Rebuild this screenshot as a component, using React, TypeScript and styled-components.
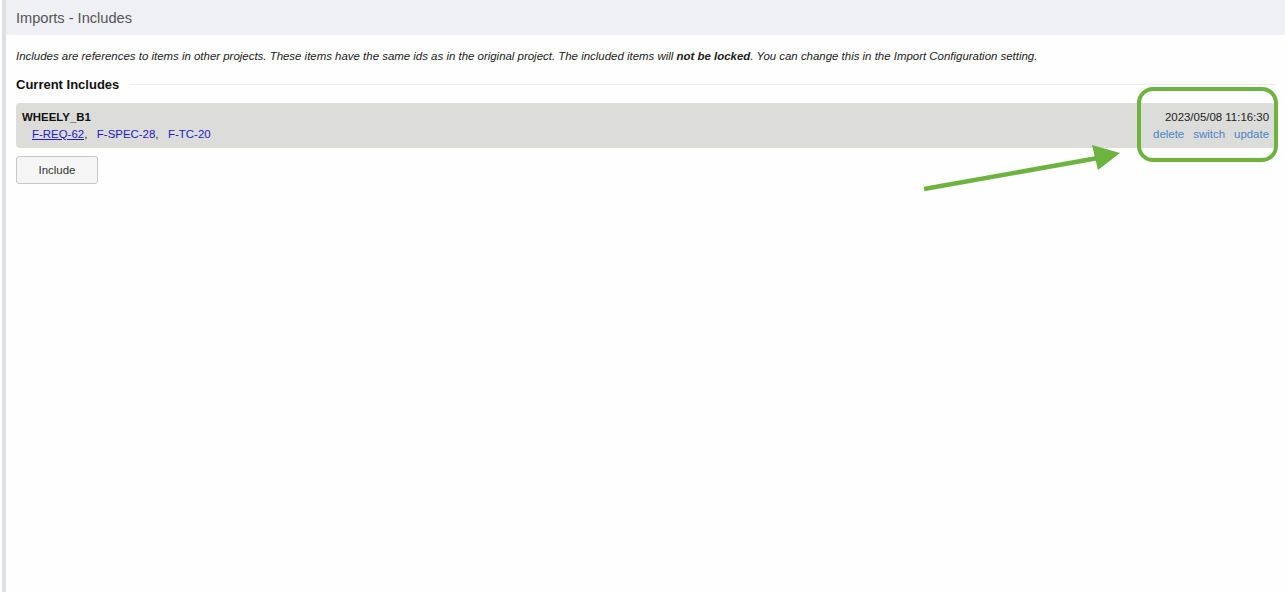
import React from "react";
import styled, { createGlobalStyle } from "styled-components";

const GlobalStyle = createGlobalStyle`
    html, body {
        margin: 0;
        padding: 0;
        background: #fdfefd;
        font-family: "Liberation Sans", Arial, sans-serif;
    }
    #root {
        min-height: 592px;
    }
`;

const Page = styled.div`
    display: flex;
    min-height: 592px;
    position: relative;
`;

const SideStrip = styled.div`
    width: 4px;
    margin-left: 2px;
    background-color: #dde1e6;
    flex-shrink: 0;
`;

const Main = styled.div`
    flex: 1;
    display: flex;
    flex-direction: column;
`;

const TitleBar = styled.header`
    height: 35px;
    display: flex;
    align-items: center;
    padding-left: 10px;
    background-color: #eef0f4;
    color: #555;
    font-size: 14.6px;
`;

const Content = styled.div`
    padding: 14px 9px 0 10px;
`;

const Intro = styled.p`
    margin: 0;
    font-size: 11.45px;
    font-style: italic;
    color: #222;
    line-height: 14px;
    b {
        font-weight: bold;
    }
`;

const SectionTitle = styled.div`
    display: flex;
    align-items: center;
    gap: 10px;
    margin-top: 14px;
    font-size: 13px;
    font-weight: bold;
    color: #111;
    &::after {
        content: "";
        flex: 1;
        height: 1px;
        background: #eceeec;
    }
`;

const IncludeRow = styled.div`
    margin-top: 11px;
    display: flex;
    justify-content: space-between;
    align-items: flex-start;
    padding: 6px 7px 5px 6px;
    background-color: #dcdddb;
    border-radius: 4px;
    font-size: 11.45px;
    line-height: 17px;
`;

const Column = styled.div<{ $right?: boolean }>`
    display: flex;
    flex-direction: column;
    align-items: ${(p) => (p.$right ? "flex-end" : "flex-start")};
`;

const ProjectName = styled.div`
    font-weight: bold;
    color: #111;
`;

const ItemList = styled.div`
    padding-left: 10px;
    color: #333;
`;

const ItemLink = styled.a<{ $hover?: boolean }>`
    color: #2020c0;
    text-decoration: ${(p) => (p.$hover ? "underline" : "none")};
    cursor: pointer;
`;

const Stamp = styled.div`
    color: #222;
`;

const Actions = styled.div`
    display: flex;
    gap: 9px;
`;

const Action = styled.a`
    color: #4a84c4;
    text-decoration: none;
    cursor: pointer;
`;

const IncludeButton = styled.button`
    margin-top: 8px;
    width: 82px;
    height: 28px;
    background: #f5f5f5;
    border: 1px solid #c8c8c8;
    border-radius: 3px;
    font-family: inherit;
    font-size: 11.45px;
    color: #333;
    cursor: pointer;
`;

const Annotation = styled.svg`
    position: absolute;
    left: 0;
    top: 0;
    pointer-events: none;
`;

const items = ["F-REQ-62", "F-SPEC-28", "F-TC-20"];

const App = () => {
    return (
        <>
            <GlobalStyle />
            <Page>
                <SideStrip />
                <Main>
                    <TitleBar>Imports - Includes</TitleBar>
                    <Content>
                        <Intro>
                            Includes are references to items in other projects. These items have the same ids as in the
                            original project. The included items will <b>not be locked</b>. You can change this in the
                            Import Configuration setting.
                        </Intro>
                        <SectionTitle>Current Includes</SectionTitle>
                        <IncludeRow>
                            <Column>
                                <ProjectName>WHEELY_B1</ProjectName>
                                <ItemList>
                                    {items.map((id, i) => (
                                        <React.Fragment key={id}>
                                            <ItemLink $hover={i === 0}>{id}</ItemLink>
                                            {i < items.length - 1 && <>,&nbsp;&nbsp; </>}
                                        </React.Fragment>
                                    ))}
                                </ItemList>
                            </Column>
                            <Column $right>
                                <Stamp>2023/05/08 11:16:30</Stamp>
                                <Actions>
                                    <Action>delete</Action>
                                    <Action>switch</Action>
                                    <Action>update</Action>
                                </Actions>
                            </Column>
                        </IncludeRow>
                        <IncludeButton>Include</IncludeButton>
                    </Content>
                </Main>
                <Annotation width="1285" height="592" viewBox="0 0 1285 592">
                    <rect x="1139" y="89" width="137" height="71" rx="14" fill="none" stroke="#6db33f" strokeWidth="4" />
                    <line x1="924" y1="189" x2="1098" y2="158" stroke="#6db33f" strokeWidth="4.5" />
                    <polygon points="1092,145 1120,153 1098,170" fill="#6db33f" />
                </Annotation>
            </Page>
        </>
    );
};

export default App;
